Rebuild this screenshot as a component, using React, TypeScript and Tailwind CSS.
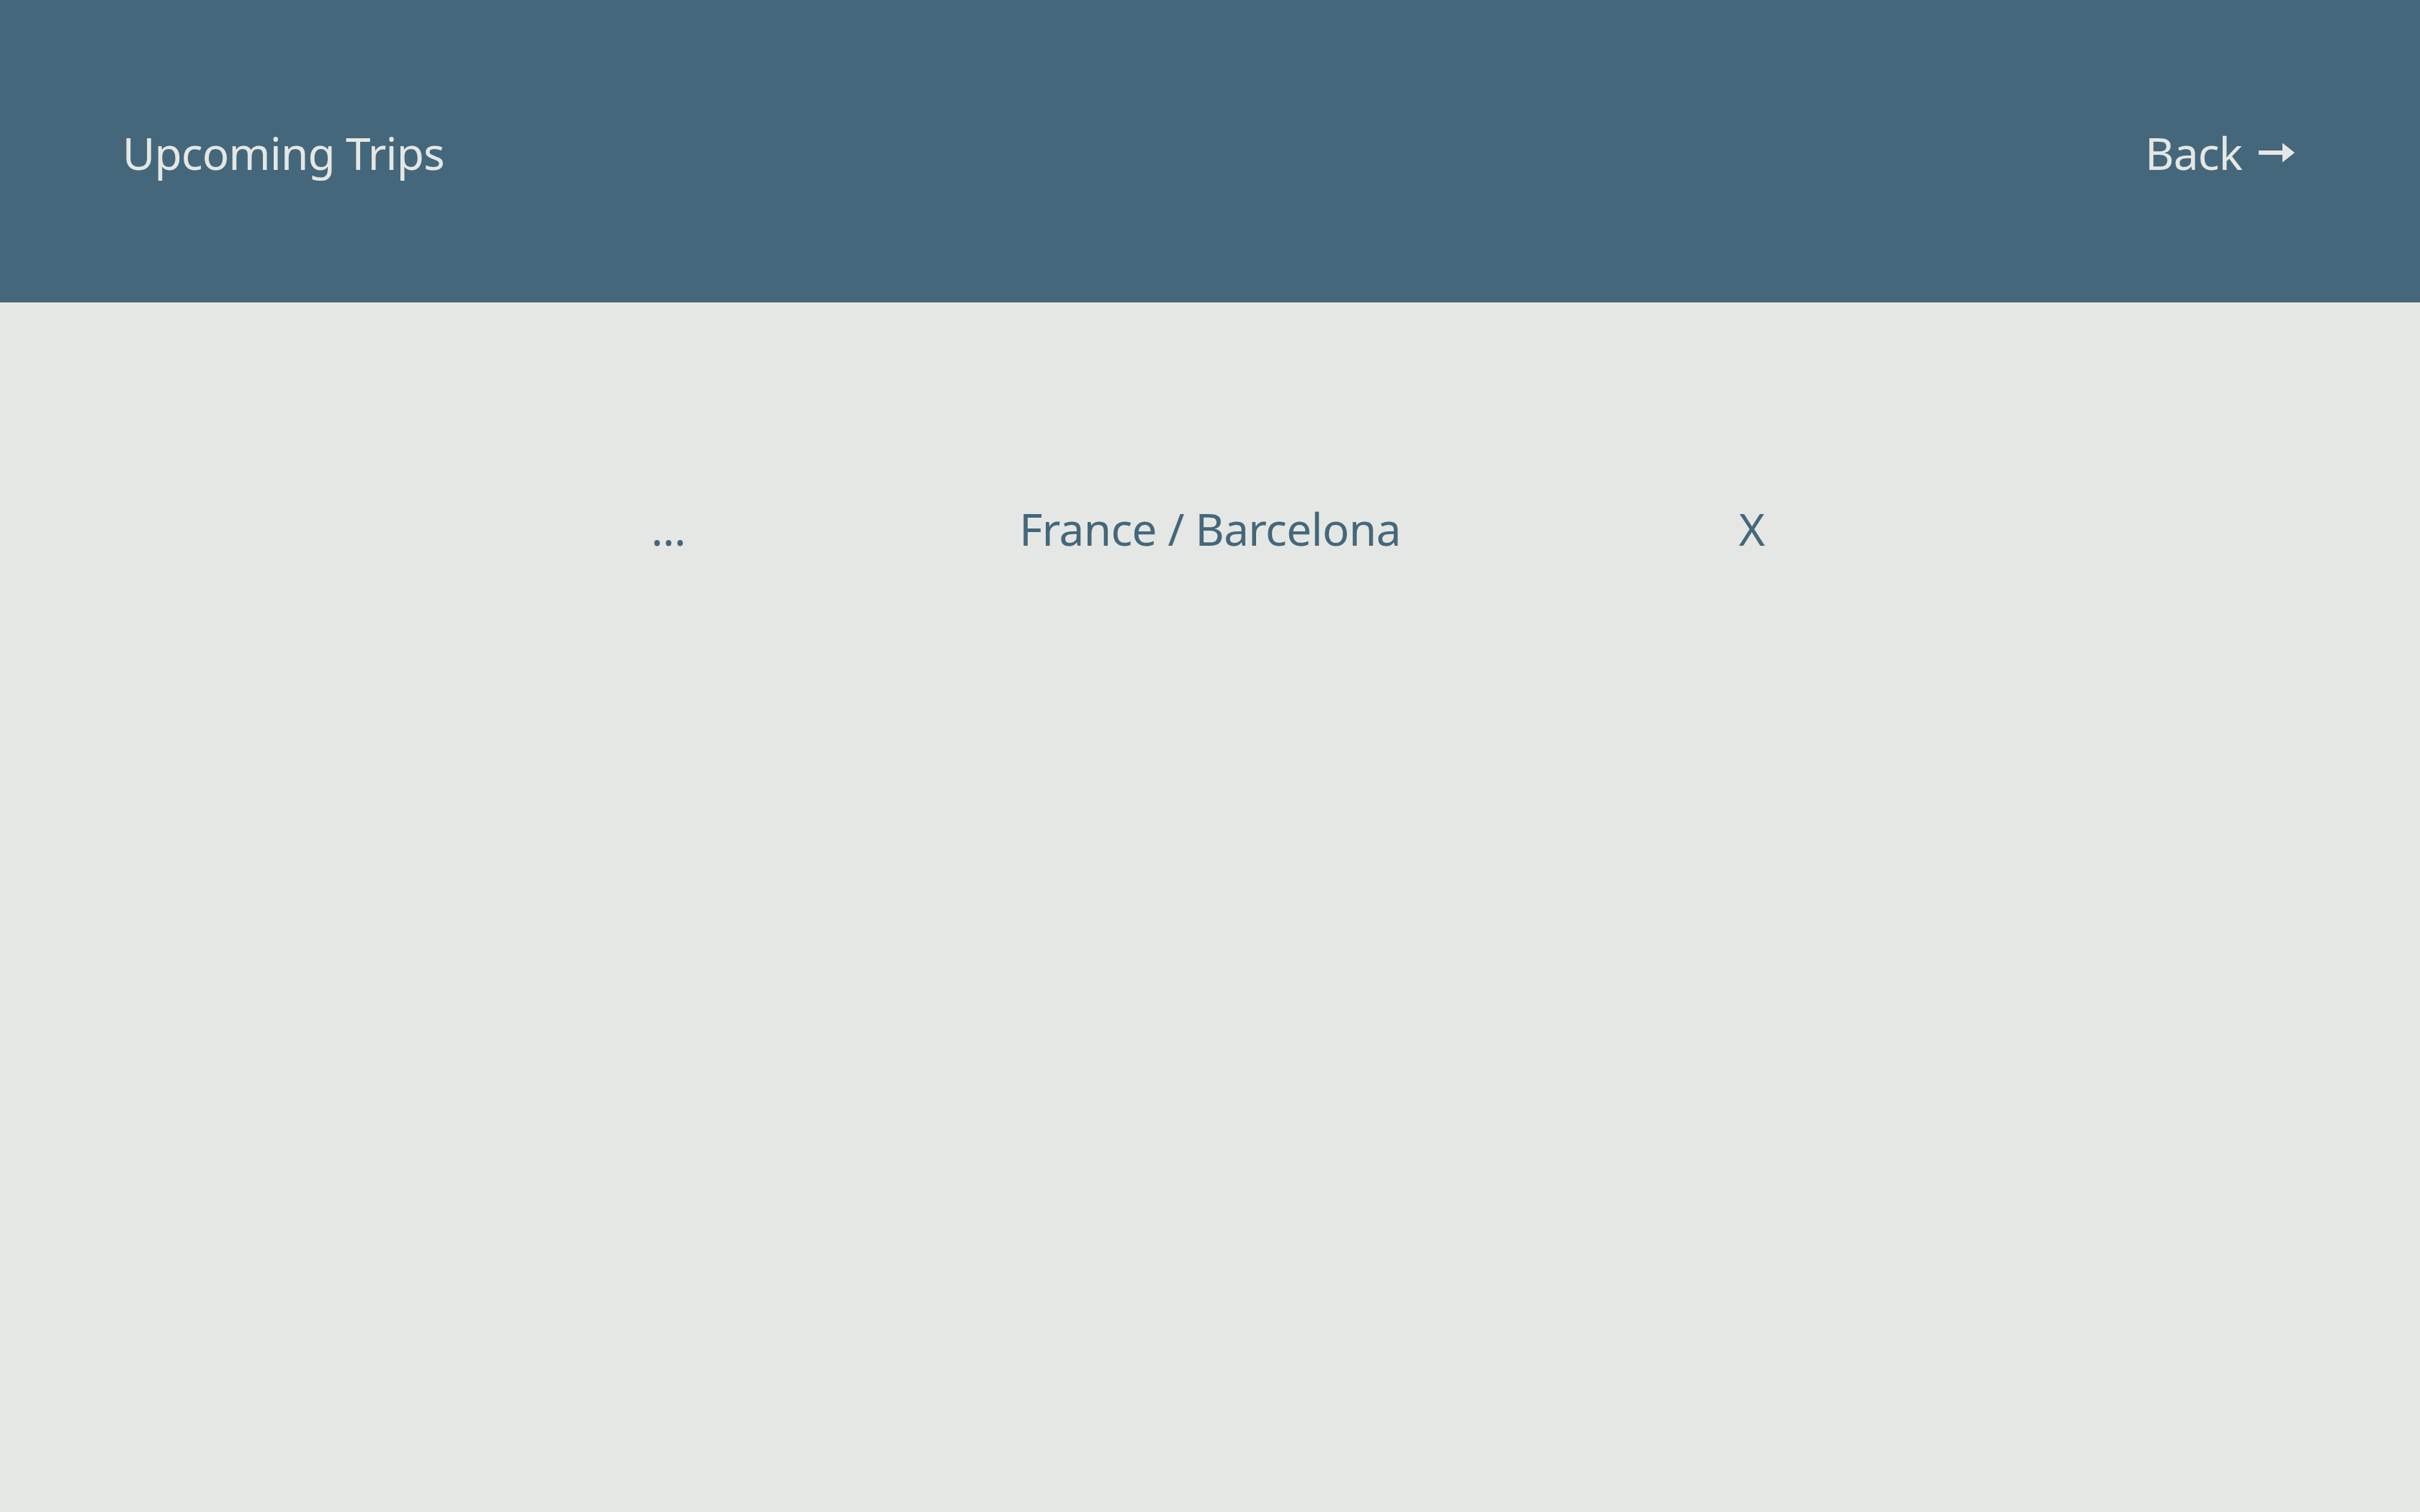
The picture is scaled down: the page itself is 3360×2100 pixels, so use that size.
import React from 'react';

const ArrowRight: React.FC = () => (
  <svg width="50" height="28" viewBox="0 0 50 28" className="ml-[23px]" fill="currentColor">
    <rect x="0" y="11" width="36" height="6" />
    <path d="M33 0.5 L50 14 L33 27.5 Z" />
  </svg>
);

const App: React.FC = () => {
  return (
    <div className="min-h-screen bg-[#e5e7e4] font-['Noto_Sans',sans-serif]">
      <header className="h-[420px] bg-[#44677b] flex items-center justify-between pl-[170px] pr-[174px] pt-[4px] text-[#e5e7e4] text-[62px] tracking-[-0.8px] leading-[1.5]">
        <span>Upcoming Trips</span>
        <span className="flex items-center">
          Back
          <ArrowRight />
        </span>
      </header>

      <div className="pt-[268px]">
        <div className="w-[2256px] mx-auto grid grid-cols-3 text-center text-[62px] tracking-[-0.6px] leading-[1.5] text-[#44677b]">
          <span>...</span>
          <span>France / Barcelona</span>
          <span>X</span>
        </div>
      </div>
    </div>
  );
};

export default App;
